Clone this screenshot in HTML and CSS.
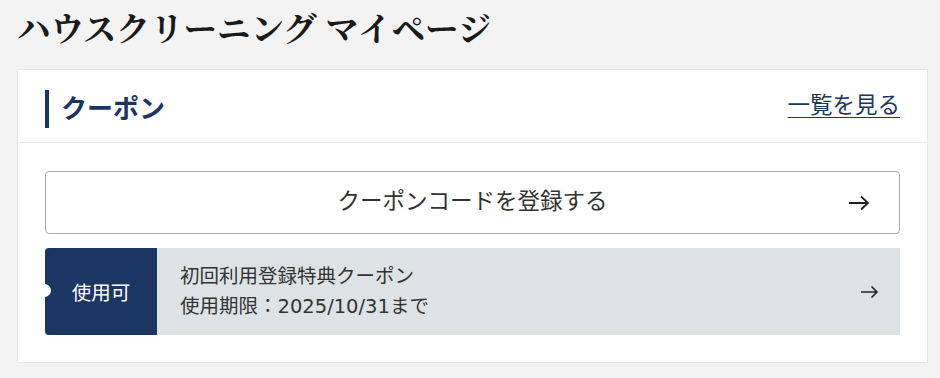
FILE: index.html
```html
<!DOCTYPE html>
<html lang="ja">
<head>
<meta charset="utf-8">
<link rel="stylesheet" href="styles.css">
</head>
<body>
<h1 class="page-title">ハウスクリーニング マイページ</h1>
<section class="card">
  <div class="card-head">
    <h2 class="card-title">クーポン</h2>
    <a class="more-link" href="#">一覧を見る</a>
  </div>
  <div class="card-body">
    <button class="register-btn" type="button">
      <span class="register-label">クーポンコードを登録する</span>
      <svg class="arrow arrow-lg" width="22" height="16" viewBox="0 0 22 16"><path d="M1 8H20M13 1.5L20 8L13 14.5" fill="none" stroke="#222" stroke-width="1.8"/></svg>
    </button>
    <a class="coupon" href="#">
      <span class="coupon-badge">使用可</span>
      <span class="coupon-info">
        <span class="coupon-name">初回利用登録特典クーポン</span>
        <span class="coupon-limit">使用期限：2025/10/31まで</span>
      </span>
      <svg class="arrow arrow-sm" width="19" height="14" viewBox="0 0 19 14"><path d="M1 7H17M11.5 1.5L17 7L11.5 12.5" fill="none" stroke="#222" stroke-width="1.6"/></svg>
    </a>
  </div>
</section>
</body>
</html>
```
FILE: styles.css
```css
html, body {
  margin: 0;
  padding: 0;
}
body {
  background: #f3f3f3;
  padding: 8px 12px 0 17px;
  font-family: "DejaVu Sans", "Noto Sans CJK JP", sans-serif;
  color: #333;
}
.page-title {
  margin: 0 0 23px;
  font-family: "Noto Serif CJK JP", "IPAexMincho", "IPAMincho", "Liberation Serif", serif;
  font-size: 33.5px;
  line-height: 38px;
  font-weight: bold;
  color: #1a1a1a;
}
.card {
  background: #fff;
  border: 1px solid #e8e8e8;
  width: 909px;
  box-sizing: content-box;
}
.card-head {
  height: 72px;
  border-bottom: 1px solid #e8e8e8;
  display: flex;
  align-items: center;
  justify-content: space-between;
  padding: 0 27px;
}
.card-title {
  margin: 6px 0 0;
  border-left: 4px solid #1c3664;
  padding-left: 12px;
  font-size: 26px;
  line-height: 38px;
  font-weight: bold;
  color: #1c3664;
}
.more-link {
  font-size: 22.5px;
  line-height: 30px;
  color: #1c3664;
  text-decoration: underline;
  text-underline-offset: 4px;
  text-decoration-thickness: 1px;
  margin-top: -2px;
}
.card-body {
  padding: 28px 27px 27px;
  display: flex;
  flex-direction: column;
  gap: 14px;
}
.register-btn {
  position: relative;
  display: flex;
  align-items: center;
  justify-content: center;
  height: 63px;
  width: 100%;
  background: #fff;
  border: 1px solid #aaa;
  border-radius: 4px;
  font-family: inherit;
  font-size: 22.5px;
  color: #333;
  padding: 0;
  cursor: pointer;
}
.register-label {
  line-height: 30px;
  margin-top: -3px;
}
.arrow-lg {
  position: absolute;
  right: 29px;
  top: 23px;
}
.coupon {
  position: relative;
  display: flex;
  align-items: stretch;
  height: 87px;
  background: #dde3e5;
  text-decoration: none;
  color: #333;
}
.coupon-badge {
  position: relative;
  flex: 0 0 112px;
  display: flex;
  align-items: center;
  justify-content: center;
  background: #1c3664;
  color: #fff;
  font-size: 19.5px;
  border-radius: 4px 0 0 4px;
}
.coupon-badge::before {
  content: "";
  position: absolute;
  left: -7px;
  top: 36px;
  width: 13px;
  height: 13px;
  border-radius: 50%;
  background: #fff;
}
.coupon-info {
  flex: 1;
  display: flex;
  flex-direction: column;
  justify-content: center;
  padding-left: 23px;
  font-size: 19.5px;
  line-height: 30px;
  color: #333;
}
.arrow-sm {
  align-self: center;
  margin-right: 21px;
}
```
